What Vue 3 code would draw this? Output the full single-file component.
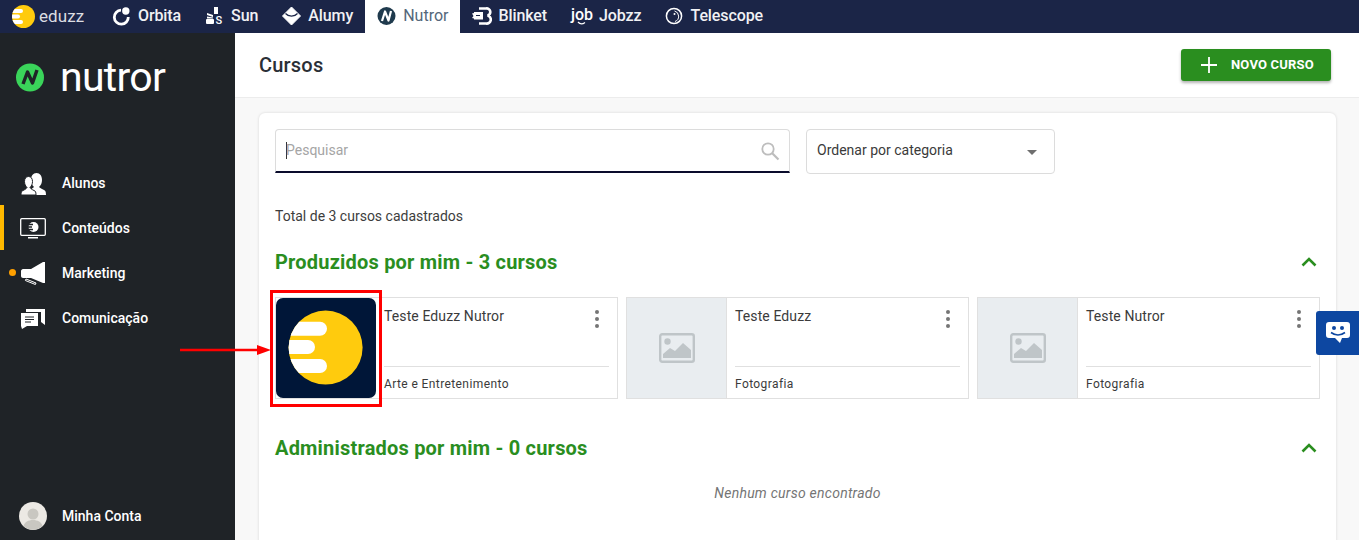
<script setup>
const apps = [
  { name: 'Orbita', icon: 'orbita', w: 19 },
  { name: 'Sun', icon: 'sun', w: 19 },
  { name: 'Alumy', icon: 'alumy', w: 19 },
  { name: 'Nutror', icon: 'nutror', w: 19, active: true },
  { name: 'Blinket', icon: 'blinket', w: 19 },
  { name: 'Jobzz', icon: 'jobzz', w: 21 },
  { name: 'Telescope', icon: 'telescope', w: 18 },
]
const menu = [
  { name: 'Alunos', icon: 'alunos' },
  { name: 'Conteúdos', icon: 'conteudos', active: true },
  { name: 'Marketing', icon: 'marketing', dot: true },
  { name: 'Comunicação', icon: 'comunicacao' },
]
const courses = [
  { title: 'Teste Eduzz Nutror', category: 'Arte e Entretenimento', logo: true },
  { title: 'Teste Eduzz', category: 'Fotografia' },
  { title: 'Teste Nutror', category: 'Fotografia' },
]
</script>

<template>
  <div class="root">
    <nav class="topbar">
      <div class="brand">
        <svg class="brand-mark" viewBox="0 0 23 23" width="23" height="23">
          <defs><clipPath id="bm"><circle cx="11.5" cy="11.5" r="11.5" /></clipPath></defs>
          <circle cx="11.5" cy="11.5" r="11.5" fill="#ffcb0d" />
          <g clip-path="url(#bm)" fill="#fff">
            <rect x="-3" y="4" width="14" height="4" rx="2" />
            <rect x="-3" y="9.5" width="11" height="4" rx="2" />
            <rect x="-3" y="15" width="14" height="4" rx="2" />
          </g>
        </svg>
        <span class="brand-name">eduzz</span>
      </div>
      <a v-for="a in apps" :key="a.name" class="app" :class="{ active: a.active }">
        <svg :width="a.w" height="20" :viewBox="`0 0 ${a.w} 20`" class="app-icon">
          <g v-if="a.icon === 'orbita'">
            <path d="M9 4.2A7 7 0 1 0 16.300 11" fill="none" stroke="#fff" stroke-width="2.800" />
            <circle cx="13.800" cy="5" r="3.700" fill="#fff" />
          </g>
          <g v-else-if="a.icon === 'sun'" fill="#fff">
            <rect x="9" y="1" width="4" height="7" />
            <rect x="1" y="13" width="8" height="5" rx="1" />
            <path d="M2 7l6 2v2l-6-2zM2 10.500l6 1v1l-6 0z" />
            <text x="10.500" y="17.500" font-size="11" font-family="Roboto, sans-serif" font-weight="500">S</text>
          </g>
          <g v-else-if="a.icon === 'alumy'">
            <path d="M9.500 1l9 9-9 9-9-9z" fill="#fff" stroke="#fff" stroke-linejoin="round" />
            <path d="M3.500 7.500c3 3.500 9 3.500 12 0" fill="none" stroke="#1b2547" stroke-width="1.200" />
          </g>
          <g v-else-if="a.icon === 'nutror'">
            <circle cx="9.500" cy="10" r="9" fill="#1f3a4d" />
            <path d="M5 15l3-9.500 3.500 9L14 5" fill="none" stroke="#fff" stroke-width="2.200" stroke-linejoin="round" />
          </g>
          <g v-else-if="a.icon === 'blinket'">
            <path d="M7 2.500h7a3.500 3.500 0 0 1 1.500 7 3.800 3.800 0 0 1-1.500 8H7" fill="none" stroke="#fff" stroke-width="2.600" />
            <path d="M0 7.500l2-.5 0-1h9v7.500H2l0-1-2-.5 1.500-2z" fill="#fff" />
            <path d="M4 9.500h4" stroke="#1b2547" stroke-width="1" />
          </g>
          <g v-else-if="a.icon === 'jobzz'">
            <text x="0" y="14" font-size="16" font-family="Roboto, sans-serif" fill="#fff">job</text>
            <path d="M7 16q3 3.500 7 .5" fill="none" stroke="#fff" stroke-width="1.300" />
          </g>
          <g v-else-if="a.icon === 'telescope'" fill="none" stroke="#fff">
            <circle cx="9" cy="10" r="7.600" stroke-width="1.500" />
            <path d="M9.500 5a5.500 5.500 0 0 1 .5 10.500" stroke-width="1" />
            <circle cx="9.500" cy="8" r="1" fill="#fff" stroke="none" />
          </g>
        </svg>
        <span>{{ a.name }}</span>
      </a>
    </nav>

    <div class="shell">
      <aside class="sidebar">
        <div class="logo">
          <svg width="28" height="29" viewBox="0 0 28 29">
            <circle cx="14" cy="14.500" r="14" fill="#3ad45a" />
            <path d="M7 21L11.500 9l5 11L21 7" fill="none" stroke="#1f2327" stroke-width="3.400" stroke-linejoin="round" />
          </svg>
          <span class="logo-name">nutror</span>
        </div>
        <ul class="menu">
          <li v-for="m in menu" :key="m.name" class="menu-item" :class="{ active: m.active }">
            <i v-if="m.dot" class="dot"></i>
            <svg width="26" height="24" viewBox="0 0 26 24" class="menu-icon">
              <g v-if="m.icon === 'alunos'" fill="#fff">
                <path d="M11 24V19c0-1 2-2 3-3-2-2-3-4-3-7 0-4 2-7 5.500-7s5.500 3 5.500 7c0 3-1 5-3 7 1 1 3 2 5 3 1 .5 2 1 2 5z" />
                <path d="M1 24c0-3 .5-4 2-4.500 2-1 3-1.500 4-3-1.500-1.500-2.500-3.500-2.500-6 0-3 1.500-5 4-5s4 2 4 5c0 2.500-1 4.500-2.500 6 1 1.500 2 2 4 3 1.500.5 2 1.500 2 4.500z" stroke="#1f2327" stroke-width="1" />
              </g>
              <g v-else-if="m.icon === 'conteudos'">
                <rect x=".7" y="2.700" width="24.600" height="16.600" rx="1" fill="none" stroke="#fff" stroke-width="1.300" />
                <path d="M8 21h10v1.500H8z" fill="#fff" />
                <circle cx="13.500" cy="11" r="5" fill="#fff" />
                <path d="M8 8.500h5M7 11h5M8 13.500h5" stroke="#1f2327" stroke-width="1.300" />
              </g>
              <g v-else-if="m.icon === 'marketing'" fill="#fff">
                <path d="M25 1v21l-2 0-12-5H3c-1 0-2-1-2-2V10c0-1 1-2 2-2h8l12-7z" />
                <path d="M6 18l10 4-.6 1.500-10-4z" fill="none" stroke="#fff" stroke-width="1" />
              </g>
              <g v-else-if="m.icon === 'comunicacao'" fill="#fff">
                <path d="M6 3h19v16l-4-3V6H6z" />
                <path d="M1 7h17v13H7l-5 3-1-3z" />
                <path d="M5 11h9M5 13.500h9M5 16h6" stroke="#1f2327" stroke-width="1" />
              </g>
            </svg>
            <span>{{ m.name }}</span>
          </li>
        </ul>
        <div class="account">
          <svg width="28" height="28" viewBox="0 0 28 28" class="avatar">
            <circle cx="14" cy="14" r="14" fill="#ece9e4" />
            <circle cx="14" cy="12" r="5.500" fill="#c9c7c1" />
            <path d="M4.500 24c1-4 5-6 9.500-6s8.500 2 9.500 6a14 14 0 0 1-19 0z" fill="#c9c7c1" />
          </svg>
          <span>Minha Conta</span>
        </div>
      </aside>

      <main class="main">
        <header class="header">
          <h1>Cursos</h1>
          <button class="new-btn">
            <svg width="16" height="16" viewBox="0 0 16 16"><path d="M8 0v16M0 8h16" stroke="#fff" stroke-width="1.800" /></svg>
            <span>NOVO CURSO</span>
          </button>
        </header>

        <div class="content">
          <section class="panel">
            <div class="filters">
              <div class="search">
                <i class="caret"></i>
                <span class="placeholder">Pesquisar</span>
                <svg width="20" height="20" viewBox="0 0 20 20">
                  <circle cx="8" cy="8" r="5.700" fill="none" stroke="#bdbdbd" stroke-width="1.800" />
                  <path d="M12 12l6.500 6.500" stroke="#bdbdbd" stroke-width="2.200" />
                </svg>
              </div>
              <div class="select">
                <span>Ordenar por categoria</span>
                <i class="tri"></i>
              </div>
            </div>

            <p class="total">Total de 3 cursos cadastrados</p>

            <div class="section-head first">
              <h2>Produzidos por mim - 3 cursos</h2>
              <svg width="16" height="10" viewBox="0 0 16 10"><path d="M1.500 8.500L8 2l6.500 6.500" fill="none" stroke="#2a8e1f" stroke-width="2.600" /></svg>
            </div>

            <div class="grid">
              <article v-for="c in courses" :key="c.title" class="course">
                <div class="thumb" :class="{ 'has-logo': c.logo }">
                  <svg v-if="c.logo" width="100" height="100" viewBox="0 0 100 100">
                    <defs><clipPath id="cc"><circle cx="49.600" cy="49.600" r="37" /></clipPath></defs>
                    <rect width="100" height="100" rx="7" fill="#001638" />
                    <circle cx="49.600" cy="49.600" r="37" fill="#ffcb0d" />
                    <g clip-path="url(#cc)" fill="#fff">
                      <rect x="-10" y="23.700" width="61" height="14" rx="7" />
                      <rect x="-10" y="42" width="49" height="14" rx="7" />
                      <rect x="-10" y="61" width="61" height="14" rx="7" />
                    </g>
                  </svg>
                  <svg v-else width="36" height="30" viewBox="0 0 36 30">
                    <rect x="1.200" y="1.200" width="33.600" height="27.600" rx="2" fill="none" stroke="#bfc5c8" stroke-width="2.400" />
                    <circle cx="8.500" cy="8.500" r="3.200" fill="#bfc5c8" />
                    <path d="M4 25v-4l7-6 5 3 8-8 8 7v8z" fill="#bfc5c8" />
                  </svg>
                </div>
                <div class="info">
                  <div class="title-row">
                    <span class="title">{{ c.title }}</span>
                    <span class="kebab"><i></i><i></i><i></i></span>
                  </div>
                  <div class="category">{{ c.category }}</div>
                </div>
              </article>
            </div>

            <div class="section-head second">
              <h2>Administrados por mim - 0 cursos</h2>
              <svg width="16" height="10" viewBox="0 0 16 10"><path d="M1.500 8.500L8 2l6.500 6.500" fill="none" stroke="#2a8e1f" stroke-width="2.600" /></svg>
            </div>
            <p class="empty">Nenhum curso encontrado</p>
          </section>
        </div>
      </main>
    </div>

    <button class="chat" aria-label="Chat">
      <svg width="24" height="22" viewBox="0 0 24 22">
        <path d="M3 0h18a3 3 0 0 1 3 3v10a3 3 0 0 1-3 3h-4l-1 0-2 5-5-5H3a3 3 0 0 1-3-3V3a3 3 0 0 1 3-3z" fill="#fff" />
        <circle cx="8" cy="6" r="2" fill="#0d47a1" />
        <circle cx="16" cy="6" r="2" fill="#0d47a1" />
        <path d="M5 10.500q7 5 14 0" fill="none" stroke="#0d47a1" stroke-width="1.600" />
      </svg>
    </button>

    <div class="highlight"></div>
    <svg class="arrow" width="92" height="12" viewBox="0 0 92 12">
      <path d="M0 6h80" stroke="#f00" stroke-width="2.400" />
      <path d="M77 1l14 5-14 5z" fill="#f00" />
    </svg>
  </div>
</template>

<style>
html, body { margin: 0; background: #f8f8f8; overflow: hidden; }
</style>

<style scoped>
.root {
  position: relative;
  width: 1359px;
  height: 540px;
  overflow: hidden;
  font-family: Roboto, "Liberation Sans", sans-serif;
  display: flex;
  flex-direction: column;
}
.topbar {
  height: 33px;
  flex: none;
  background: #1b2547;
  display: flex;
  align-items: stretch;
}
.brand {
  width: 100px;
  box-sizing: border-box;
  padding: 0 0 1px 12px;
  display: flex;
  align-items: center;
  gap: 4px;
}
.brand-name { color: #dcdde2; font-size: 17px; letter-spacing: .1px; }
.app {
  display: flex;
  align-items: center;
  gap: 7px;
  padding: 0 12px 2px;
  color: #f1f1f4;
  font-size: 16px;
  font-weight: 500;
  letter-spacing: -.1px;
}
.app.active { background: #fff; color: #54677a; font-weight: 400; letter-spacing: 0; }
.app-icon { flex: none; overflow: visible; }
.shell { flex: 1; display: flex; min-height: 0; }
.sidebar {
  width: 235px;
  flex: none;
  background: #1f2327;
  display: flex;
  flex-direction: column;
}
.logo {
  height: 88px;
  padding-left: 16px;
  display: flex;
  align-items: center;
  gap: 16px;
  box-sizing: border-box;
}
.logo-name {
  color: #fff;
  font-size: 41px;
  line-height: 40px;
  letter-spacing: -.7px;
  font-family: Roboto, sans-serif;
  font-weight: 400;
}
.menu { list-style: none; margin: 39px 0 0; padding: 0; }
.menu-item {
  position: relative;
  height: 45px;
  display: flex;
  align-items: center;
  padding-left: 20px;
  gap: 16px;
  color: #fff;
  font-size: 14px;
  font-weight: 500;
}
.menu-item.active { box-shadow: inset 4px 0 0 #ffb900; }
.dot {
  position: absolute;
  left: 9px;
  top: 19px;
  width: 7px;
  height: 7px;
  border-radius: 50%;
  background: #ffa000;
}
.account {
  margin-top: auto;
  height: 48px;
  display: flex;
  align-items: center;
  padding-left: 19px;
  gap: 15px;
  color: #fff;
  font-size: 14px;
  font-weight: 500;
}
.main { flex: 1; min-width: 0; display: flex; flex-direction: column; }
.header {
  height: 65px;
  flex: none;
  box-sizing: border-box;
  background: #fff;
  border-bottom: 1px solid #ececec;
  display: flex;
  align-items: center;
  justify-content: space-between;
  padding: 0 28px 1px 24px;
}
.header h1 { margin: 0; font-size: 20px; font-weight: 500; color: #2b2f36; letter-spacing: .2px; }
.new-btn {
  width: 150px;
  height: 32px;
  border: 0;
  border-radius: 3px;
  background: #2a8e1f;
  box-shadow: 0 2px 3px rgba(0,0,0,.3);
  display: flex;
  align-items: center;
  padding: 0 0 0 20px;
  gap: 14px;
  color: #fff;
  font-family: inherit;
  font-size: 13px;
  letter-spacing: .2px;
  font-weight: 700;
}
.content { flex: 1; padding: 15px 23px 0 24px; min-height: 0; }
.panel {
  background: #fff;
  border-radius: 6px 6px 0 0;
  box-shadow: 0 0 3px rgba(0,0,0,.14);
  padding: 16px;
  height: 600px;
  box-sizing: border-box;
}
.filters { display: flex; gap: 16px; align-items: flex-start; }
.search {
  width: 515px;
  height: 44px;
  box-sizing: border-box;
  border: 1px solid #dcdcdc;
  border-bottom: 2px solid #0a0c2c;
  border-radius: 4px 4px 0 0;
  display: flex;
  align-items: center;
  padding: 0 9px 0 10px;
}
.caret { width: 1px; height: 17px; background: #333; flex: none; }
.placeholder { flex: 1; font-size: 14px; color: #a5a5a5; margin: -2px 0 0 -1px; }
.select {
  width: 249px;
  height: 45px;
  box-sizing: border-box;
  border: 1px solid #dcdcdc;
  border-radius: 4px;
  display: flex;
  align-items: center;
  justify-content: space-between;
  padding: 0 17px 3px 10px;
  font-size: 14px;
  color: #3a3a3a;
}
.tri {
  width: 0;
  height: 0;
  border: 5px solid transparent;
  border-top: 5px solid #6f6f6f;
  border-bottom: 0;
  margin-top: 5px;
}
.total { margin: 34px 0 0; font-size: 14px; line-height: 16px; color: #3d3d3d; }
.section-head {
  display: flex;
  justify-content: space-between;
  align-items: center;
  padding-right: 3px;
}
.section-head.first { margin-top: 26px; }
.section-head.second { margin-top: 37px; }
.section-head h2 {
  margin: 0;
  font-size: 20px;
  line-height: 24px;
  font-weight: 700;
  letter-spacing: .2px;
  color: #2a8e1f;
}
.grid {
  margin-top: 23px;
  display: grid;
  grid-template-columns: repeat(3, 1fr);
  gap: 8px;
}
.course {
  height: 102px;
  box-sizing: border-box;
  border: 1px solid #e0e0e0;
  display: flex;
}
.thumb {
  width: 100px;
  flex: none;
  box-sizing: border-box;
  background: #e9edf0;
  border-right: 1px solid #e0e0e0;
  display: flex;
  align-items: center;
  justify-content: center;
}
.thumb.has-logo { background: #fff; border-right: 0; }
.info {
  flex: 1;
  min-width: 0;
  display: flex;
  flex-direction: column;
  padding: 0 8px;
}
.title-row {
  flex: 1;
  display: flex;
  justify-content: space-between;
  align-items: flex-start;
  border-bottom: 1px solid #e0e0e0;
  padding-top: 10px;
}
.title { font-size: 14px; line-height: 16px; letter-spacing: .1px; color: #3b3b3b; }
.kebab {
  display: flex;
  flex-direction: column;
  gap: 3px;
  padding-top: 2px;
  padding-right: 10px;
}
.kebab i { width: 4px; height: 4px; border-radius: 50%; background: #757575; }
.category {
  height: 31px;
  line-height: 34px;
  font-size: 12px;
  letter-spacing: .4px;
  color: #3b3b3b;
}
.empty {
  margin: 25px 0 0;
  text-align: center;
  font-size: 14px;
  font-style: italic;
  letter-spacing: .25px;
  color: #757575;
}
.chat {
  position: absolute;
  right: 0;
  top: 311px;
  width: 43px;
  height: 44px;
  border: 0;
  padding: 0;
  border-radius: 3px 0 0 3px;
  background: #0d47a1;
  display: flex;
  align-items: center;
  justify-content: center;
}
.highlight {
  position: absolute;
  left: 270px;
  top: 290px;
  width: 112px;
  height: 117px;
  box-sizing: border-box;
  border: 3px solid #f00;
}
.arrow {
  position: absolute;
  left: 180px;
  top: 344px;
}
</style>
